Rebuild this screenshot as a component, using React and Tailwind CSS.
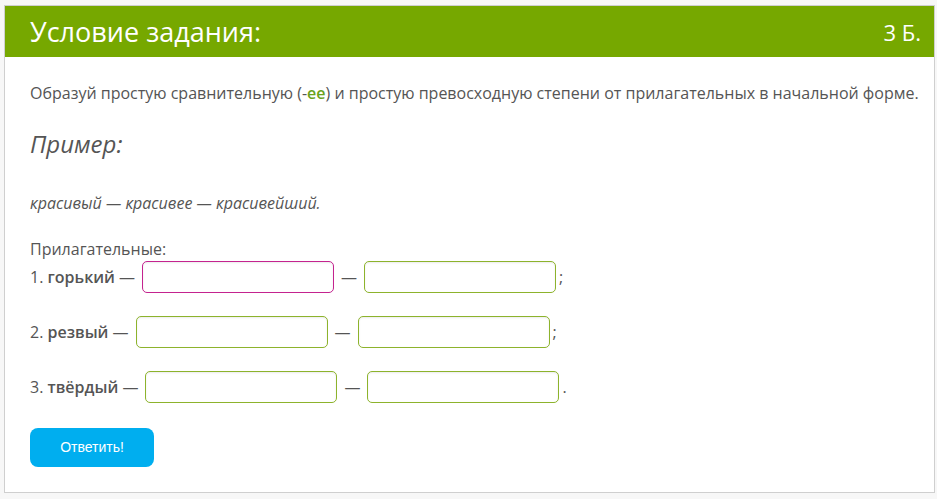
import React from "react";

const rows = [
  { n: 1, word: "горький", end: ";", first: "border-[#c4238f]" },
  { n: 2, word: "резвый", end: ";", first: "border-[#8db32c]" },
  { n: 3, word: "твёрдый", end: ".", first: "border-[#8db32c]" },
];

const Field = ({ className }) => (
  <input
    type="text"
    className={`w-[192px] h-[32px] mx-[7px] rounded-[5px] border bg-white shadow-[inset_0_1px_2px_rgba(0,0,0,0.08)] outline-none ${className}`}
  />
);

export default function App() {
  return (
    <div className="min-h-screen bg-[#f7f7f7] pt-[5px] pl-[4px] pr-[2px] font-['Open_Sans',sans-serif] text-[#555]">
      <div className="border border-[#cfcfcf] bg-white h-[488px]">
        <div className="flex items-center justify-between h-[51px] bg-[#76a800] pl-[25px] pr-[13px] text-white">
          <h1 className="text-[27px] leading-none">Условие задания:</h1>
          <span className="text-[22px] leading-none">3 Б.</span>
        </div>

        <div className="pl-[25px] pr-[8px] pt-[25px]">
          <p className="text-[16px] leading-[22px] whitespace-nowrap">
            Образуй простую сравнительную (-<b className="text-[#6aa21b] font-semibold">ее</b>) и простую превосходную степени от прилагательных в начальной форме.
          </p>

          <h2 className="mt-[24px] text-[24px] italic leading-[32px]">Пример:</h2>

          <p className="mt-[32px] text-[16px] italic leading-[22px]">красивый — красивее — красивейший.</p>

          <p className="mt-[24px] text-[16px] leading-[22px]">Прилагательные:</p>

          <div className="mt-[1px] flex flex-col gap-[23px] text-[16px]">
            {rows.map((r) => (
              <div key={r.n} className="flex items-center">
                <span>
                  {r.n}. <b className="font-semibold">{r.word}</b> —
                </span>
                <Field className={r.first} />
                <span>—</span>
                <Field className="border-[#8db32c]" />
                <span className="-ml-[4px]">{r.end}</span>
              </div>
            ))}
          </div>

          <button className="mt-[25px] w-[124px] h-[39px] rounded-[8px] bg-[#00aeef] text-white text-[14px] font-['Liberation_Sans',sans-serif]">
            Ответить!
          </button>
        </div>
      </div>
    </div>
  );
}
